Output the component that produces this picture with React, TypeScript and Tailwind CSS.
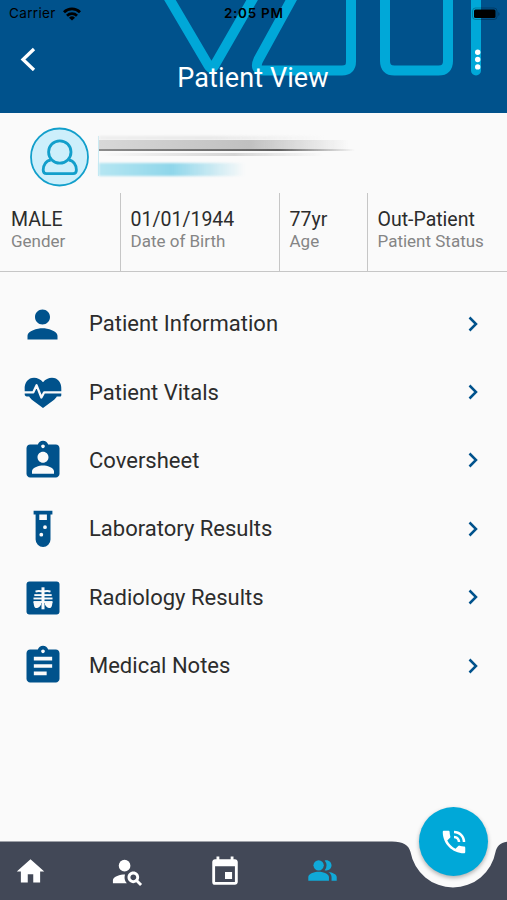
import type { ReactNode } from 'react';
import {
    MdAssignment,
    MdAssignmentInd,
    MdEvent,
    MdHome,
    MdPerson,
    MdPersonSearch,
    MdPhoneInTalk,
} from 'react-icons/md';

const stats = [
    { value: 'MALE', label: 'Gender', cell: 'w-[121px] pl-[11px] border-r' },
    { value: '01/01/1944', label: 'Date of Birth', cell: 'w-[159px] pl-[9.500px] border-r' },
    { value: '77yr', label: 'Age', cell: 'w-[88px] pl-[9.500px] border-r' },
    { value: 'Out-Patient', label: 'Patient Status', cell: 'flex-1 pl-[9.500px]' },
];

function HeartPulseIcon() {
    return (
        <svg viewBox="0 0 38 32" className="w-[38px] h-[32px]" fill="none">
            <path
                fill="currentColor"
                d="M.7 12.500C.2 5.500 4.200.7 10 .7c3.500 0 6.700 1.600 9 4.600C21.300 2.300 24.500.7 28 .7c5.800 0 9.800 4.800 9.300 11.800v5.400c0 1-.5 1.500-1.500 1.500h-3c-.7 1.400-1.800 2.300-3 3.500L19 31 8.200 22.900c-1.200-1.200-2.300-2.100-3-3.500H2.800C1.500 19.400.7 18.700.7 17.300z"
            />
            <path d="M0 15.300H9.300L12.600 8.300 17.400 20.500 20.200 15.300H38" stroke="#fafafa" strokeWidth="2.300" strokeLinejoin="round" />
        </svg>
    );
}

function PeopleIcon() {
    return (
        <svg viewBox="0 0 24 24" className="ml-[65px] mb-[2px] size-[31px] text-[#10a9d8]" fill="currentColor">
            <path d="M16.670 13.130C18.040 14.060 19 15.320 19 17v3h4v-3c0-2.180-3.570-3.470-6.330-3.870z" />
            <circle cx="9" cy="8" r="4" />
            <path d="M15 12c2.210 0 4-1.790 4-4s-1.790-4-4-4c-.47 0-.91.1-1.330.24a5.980 5.980 0 0 1 0 7.520c.42.14.86.24 1.330.24zM9 13c-2.670 0-8 1.340-8 4v3h16v-3c0-2.660-5.330-4-8-4z" />
        </svg>
    );
}

function TestTubeIcon() {
    return (
        <svg viewBox="0 0 20 38" className="w-[20px] h-[38px]" fill="currentColor">
            <path
                fillRule="evenodd"
                d="M.6.8h18.800v3.600h-1.900v25.100a7.400 7.400 0 0 1-14.900 0V4.400H.6zM6.300 4.500v5.500h7.600V4.500zM12 15.300a1.900 1.900 0 1 0 0 3.800 1.900 1.900 0 0 0 0-3.800zM8.300 22.800a1.900 1.900 0 1 0 0 3.800 1.900 1.900 0 0 0 0-3.800z"
            />
        </svg>
    );
}

function RibsIcon() {
    return (
        <svg viewBox="0 0 34 34" className="w-[34px] h-[34px]" fill="none">
            <rect x=".5" y=".5" width="33" height="33" rx="3" fill="currentColor" />
            <g stroke="#fafafa" strokeWidth="1.900">
                <path d="M17 6.300v22" strokeWidth="3" />
                <path d="M9.500 10.600c2-.8 4-.6 5.500-.4h4c1.500-.2 3.500-.4 5.500.4" />
                <path d="M8.300 14.100h17.400" />
                <path d="M7.500 17.500h19" />
                <path d="M7.500 21h19" />
            </g>
            <path
                fill="#fafafa"
                d="M7.600 21.200h7.400v2.500c-.9 1.500-1.900 2.800-3.800 3.300-2.500.6-3.500-2-3.600-5.800zM26.400 21.200H19v2.500c.9 1.500 1.900 2.800 3.800 3.300 2.500.6 3.500-2 3.600-5.800z"
            />
        </svg>
    );
}

const menu: { title: string; icon: ReactNode }[] = [
    { title: 'Patient Information', icon: <MdPerson className="size-[45px]" /> },
    { title: 'Patient Vitals', icon: <HeartPulseIcon /> },
    { title: 'Coversheet', icon: <MdAssignmentInd className="size-[44px]" /> },
    { title: 'Laboratory Results', icon: <TestTubeIcon /> },
    { title: 'Radiology Results', icon: <RibsIcon /> },
    { title: 'Medical Notes', icon: <MdAssignment className="size-[44px]" /> },
];

function StatusBar() {
    return (
        <div className="relative flex h-[27px] items-center justify-between pl-[9px] pr-[6px] text-black font-['Inter',sans-serif]">
            <div className="flex items-center gap-[7px]">
                <span className="text-[13.500px] leading-none tracking-[0.35px]">Carrier</span>
                <svg viewBox="0 0 18 14" className="w-[18px] h-[14px]" fill="none" stroke="currentColor" strokeWidth="2.800">
                    <path d="M1 5.200a11.400 11.400 0 0 1 16 0" />
                    <path d="M4 8.700a7.200 7.200 0 0 1 10 0" />
                    <path d="M9 13.400 6 10.700a4.300 4.300 0 0 1 6 0z" fill="currentColor" stroke="none" />
                </svg>
            </div>
            <span className="absolute left-[224px] text-[13.500px] font-semibold leading-none tracking-[0.7px]">2:05 PM</span>
            <svg viewBox="0 0 30 14" className="w-[30px] h-[14px]">
                <rect x="1.500" y="1" width="24.500" height="11.500" rx="3" fill="none" stroke="#000" strokeOpacity=".25" />
                <rect x="3" y="2.500" width="21.500" height="8.500" rx="1.500" fill="#000" />
                <path d="M27.500 5v4c1.200-.6 1.200-3.400 0-4z" fillOpacity=".4" />
            </svg>
        </div>
    );
}

function Header() {
    return (
        <header className="relative h-[113px] overflow-hidden bg-[#00528c] text-white">
            {/* Brand mark running off the top edge */}
            <svg viewBox="0 0 507 113" className="absolute inset-0 w-full h-full" fill="none" stroke="#00a8d8" strokeWidth="10" aria-hidden="true">
                <path d="M167-5 208.500 65.500Q211.500 70.500 214.500 65.500L255-5" />
                <path d="M294-5 258.500 59.500Q253.500 70.500 264 70.500H342Q351 70.500 351 61.500V-5" />
                <path d="M385-5V61Q385 70.500 394.500 70.500H438.500Q448 70.500 448 61V-5" />
                <path d="M476-5V70.500" strokeLinecap="round" />
            </svg>
            <StatusBar />
            <div className="relative flex items-start justify-between pl-[20px] pr-[25px]">
                <svg viewBox="0 0 16 24" className="mt-[20px] w-[16px] h-[24px]" fill="none" stroke="currentColor" strokeWidth="3.300">
                    <path d="M14 2 3 12.500 14 23" />
                </svg>
                <h1 className="mt-[33px] -ml-[4px] text-[27px] leading-[36px] tracking-[0.1px]">Patient View</h1>
                <svg viewBox="0 0 8 24" className="mt-[20px] w-[8px] h-[24px]" fill="currentColor">
                    <circle cx="3.700" cy="5.200" r="2.700" />
                    <circle cx="3.700" cy="12.500" r="2.700" />
                    <circle cx="3.700" cy="19.900" r="2.700" />
                </svg>
            </div>
        </header>
    );
}

function Profile() {
    return (
        <section className="flex h-[80px] items-start pl-[30px] pt-[14px]">
            <svg viewBox="0 0 60 60" className="w-[60px] h-[60px]" fill="none" stroke="#129fcb" strokeWidth="2.800">
                <circle cx="29.500" cy="30" r="28.500" fill="#cdeffb" strokeWidth="1.800" />
                <path d="M20.800 33.200c-4.700.4-7.600 4.800-7.600 9.800 0 2.600 1.100 3.600 3.300 3.600h26.600c2.200 0 3.300-1 3.300-3.600 0-5-2.900-9.400-7.600-9.800" />
                <circle cx="29.800" cy="25" r="11.200" />
            </svg>
            {/* Smudged out name and id */}
            <div className="ml-[8px] mt-[9px] flex w-[262px] flex-col border-l border-[#c9eaf3]" aria-hidden="true">
                <div className="h-[4px] w-[225px] bg-gradient-to-r from-[#eeeeee] via-[#e8e8e8] to-transparent blur-[1px]" />
                <div className="h-[9px] w-[250px] bg-gradient-to-r from-[#d8d8d8] via-[#c0c0c0] via-60% to-transparent blur-[0.5px]" />
                <div className="h-[2px] w-[256px] bg-gradient-to-r from-[#8b8b8b] via-[#606060] via-70% to-transparent blur-[0.5px]" />
                <div className="mt-[2px] h-[3px] w-[225px] bg-gradient-to-r from-[#fafafa] via-[#d5d5d5] via-60% to-transparent blur-[0.5px]" />
                <div className="mt-[7px] h-[13px] w-[146px] bg-gradient-to-r from-[#b5e6f2] via-[#8fd6ea] to-transparent blur-[1px]" />
            </div>
        </section>
    );
}

function Notch() {
    return (
        <svg viewBox="0 0 507 58" className="absolute inset-0 w-full h-full overflow-visible" aria-hidden="true">
            <path fill="#424857" d="M0-.5H392C403-.5 409 3.500 410.500 10A43.200 43.200 0 0 0 495.500 10C496.500 5 500 .5 507-.3V58H0z" />
        </svg>
    );
}

export default function App() {
    return (
        <div className="flex h-[900px] w-[507px] flex-col overflow-hidden bg-[#fafafa] text-[#2c2c2c] font-['Roboto',sans-serif]">
            <Header />
            <Profile />

            <dl className="flex h-[79px] border-b border-[#c6c6c6]">
                {stats.map((stat) => (
                    <div key={stat.label} className={`flex flex-col-reverse justify-end border-[#c6c6c6] pt-[16px] ${stat.cell}`}>
                        <dt className="text-[17px] leading-[20px] text-[#858585]">{stat.label}</dt>
                        <dd className="text-[19.500px] leading-[22px]">{stat.value}</dd>
                    </div>
                ))}
            </dl>

            <nav className="flex flex-1 flex-col pt-[18px]">
                {menu.map((item) => (
                    <a key={item.title} href="#" className="flex h-[68.400px] items-center pr-[28px]">
                        <span className="flex w-[85px] shrink-0 justify-center text-[#00528c]">{item.icon}</span>
                        <span className="ml-[4px] flex-1 text-[22px] leading-[28px]">{item.title}</span>
                        <svg viewBox="0 0 12 16" className="mb-[1px] w-[12px] h-[16px] text-[#00528c]" fill="none" stroke="currentColor" strokeWidth="2.500">
                            <path d="M2.500 1.500 9 8 2.500 14.500" />
                        </svg>
                    </a>
                ))}
            </nav>

            <footer className="relative h-[58px] shrink-0 text-white">
                <Notch />
                <div className="relative flex h-[58px] items-center pt-[1px]">
                    <MdHome className="ml-[14px] size-[33px]" />
                    <MdPersonSearch className="ml-[63px] size-[35px]" />
                    <MdEvent className="ml-[63px] size-[34px]" />
                    <PeopleIcon />
                </div>
                <button
                    type="button"
                    aria-label="Call"
                    className="absolute left-[419px] top-[-35px] flex size-[69px] items-center justify-center rounded-full bg-[#00a8d8] shadow-[0_2px_4px_rgba(0,0,0,0.3)]"
                >
                    <MdPhoneInTalk className="size-[30px]" />
                </button>
            </footer>
        </div>
    );
}
